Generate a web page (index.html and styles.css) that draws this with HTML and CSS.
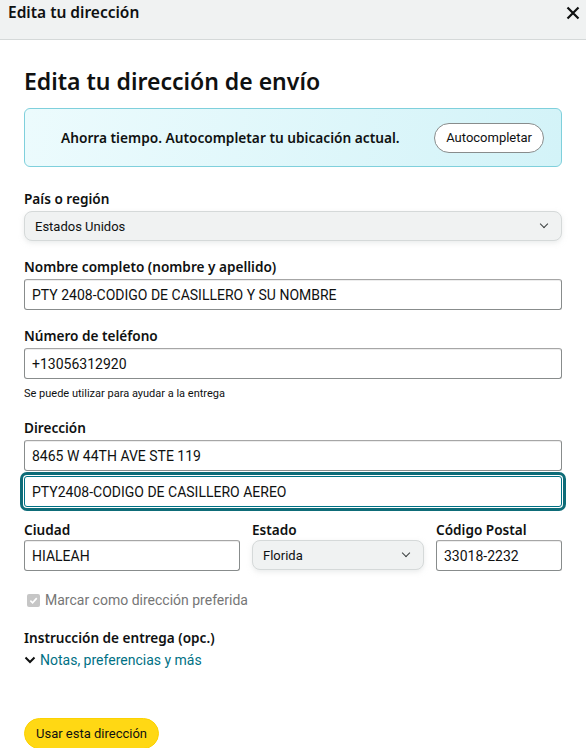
FILE: index.html
```html
<!DOCTYPE html>
<html lang="es">

<head>
    <meta charset="UTF-8">
    <meta name="viewport" content="width=device-width, initial-scale=1.0">
    <title>Edita tu dirección</title>
    <link rel="stylesheet" href="styles.css">
</head>

<body>
    <header class="modal-head">
        <span class="modal-title">Edita tu dirección</span>
        <button class="modal-close" aria-label="Cerrar">
            <svg width="14" height="14" viewBox="0 0 14 14">
                <path d="M1.5 1.5 L12.5 12.5 M12.5 1.5 L1.5 12.5" stroke="#0f1111" stroke-width="2.2" fill="none"/>
            </svg>
        </button>
    </header>

    <main class="modal-body">
        <h1>Edita tu dirección de envío</h1>

        <div class="autofill">
            <span class="autofill-text">Ahorra tiempo. Autocompletar tu ubicación actual.</span>
            <button class="btn-outline">Autocompletar</button>
        </div>

        <div class="field">
            <label for="country">País o región</label>
            <div class="select-wrap">
                <select id="country" class="select">
                    <option>Estados Unidos</option>
                </select>
            </div>
        </div>

        <div class="field">
            <label for="fullname">Nombre completo (nombre y apellido)</label>
            <input id="fullname" class="input" type="text" value="PTY 2408-CODIGO DE CASILLERO Y SU NOMBRE">
        </div>

        <div class="field">
            <label for="phone">Número de teléfono</label>
            <input id="phone" class="input" type="text" value="+13056312920">
            <p class="hint">Se puede utilizar para ayudar a la entrega</p>
        </div>

        <div class="field field-address">
            <label for="line1">Dirección</label>
            <input id="line1" class="input" type="text" value="8465 W 44TH AVE STE 119">
            <input id="line2" class="input input-focus" type="text" value="PTY2408-CODIGO DE CASILLERO AEREO">
        </div>

        <div class="field-row">
            <div>
                <label for="city">Ciudad</label>
                <input id="city" class="input" type="text" value="HIALEAH">
            </div>
            <div>
                <label for="state">Estado</label>
                <div class="select-wrap">
                    <select id="state" class="select">
                        <option>Florida</option>
                    </select>
                </div>
            </div>
            <div>
                <label for="zip">Código Postal</label>
                <input id="zip" class="input" type="text" value="33018-2232">
            </div>
        </div>

        <label class="check">
            <span class="check-box">
                <svg width="9" height="9" viewBox="0 0 10 10">
                    <path d="M1.5 5.2 L4 7.6 L8.6 2.4" stroke="#fff" stroke-width="1.8" fill="none"/>
                </svg>
            </span>
            Marcar como dirección preferida
        </label>

        <div class="instructions">
            <div class="instructions-title">Instrucción de entrega (opc.)</div>
            <a class="expander" href="#">
                <svg width="12" height="8" viewBox="0 0 12 8">
                    <path d="M1.5 1.5 L6 6 L10.5 1.5" stroke="#0f1111" stroke-width="2" fill="none"/>
                </svg>
                Notas, preferencias y más
            </a>
        </div>

        <button class="btn-primary">Usar esta dirección</button>
    </main>
</body>

</html>
```

FILE: styles.css
```css
body {
    margin: 0;
    font-family: Roboto, "Noto Sans", Arial, sans-serif;
    font-size: 13px;
    color: #0f1111;
    background: #ffffff;
    overflow: hidden;
}

.modal-head {
    height: 40px;
    box-sizing: border-box;
    background: #f0f2f2;
    border-bottom: 1px solid #d5d9d9;
    padding: 3px 6px 0 8px;
    display: flex;
    justify-content: space-between;
    align-items: flex-start;
}

.modal-title {
    font-family: "Noto Sans", Roboto, sans-serif;
    font-size: 15.5px;
    font-weight: 600;
    line-height: 18px;
}

.modal-close {
    border: none;
    background: none;
    padding: 3px 0 0;
    cursor: pointer;
}

.modal-body {
    padding: 0 24px;
}

h1 {
    margin: 26px 0 12px;
    font-family: "Noto Sans", Roboto, sans-serif;
    font-size: 23px;
    line-height: 30px;
    font-weight: 600;
}

.autofill {
    display: flex;
    align-items: center;
    justify-content: space-between;
    height: 59px;
    box-sizing: border-box;
    padding: 0 17px 0 36px;
    border: 1px solid #7fd0dc;
    border-radius: 6px;
    background: linear-gradient(100deg, #ecfbfd 0%, #d3f3f8 100%);
    margin-bottom: 23px;
}

.autofill-text {
    font-family: "Noto Sans", Roboto, sans-serif;
    font-size: 13.7px;
    font-weight: 600;
}

.btn-outline {
    height: 30px;
    padding: 0 11px;
    font: inherit;
    color: #0f1111;
    background: #ffffff;
    border: 1px solid #888c8c;
    border-radius: 15px;
}

.field {
    margin-bottom: 17px;
}

label,
.instructions-title {
    display: block;
    font-family: "Noto Sans", Roboto, sans-serif;
    font-size: 13.6px;
    font-weight: 600;
    line-height: 18px;
    margin-bottom: 3px;
}

.input {
    display: block;
    width: 100%;
    height: 31px;
    box-sizing: border-box;
    padding: 0 7px;
    font: inherit;
    font-size: 14px;
    color: #0f1111;
    border: 1px solid #888c8c;
    border-top-color: #a6a6a6;
    border-radius: 3px;
    box-shadow: 0 1px 0 rgba(255, 255, 255, .5), 0 1px 0 rgba(0, 0, 0, .07) inset;
    background: #fff;
}

.input + .input {
    margin-top: 5px;
}

.input-focus {
    border-color: #007185;
    box-shadow: 0 0 0 1px #ffffff, 0 0 0 4px #0e6c78;
}

.select-wrap {
    position: relative;
}

.select-wrap::after {
    content: "";
    position: absolute;
    right: 15px;
    top: 10px;
    width: 5px;
    height: 5px;
    border-right: 1.8px solid #3b3f3f;
    border-bottom: 1.8px solid #3b3f3f;
    transform: rotate(45deg);
    pointer-events: none;
}

.select {
    width: 100%;
    height: 30px;
    box-sizing: border-box;
    padding: 0 10px;
    font: inherit;
    color: #0f1111;
    background: #f0f2f2;
    border: 1px solid #d5d9d9;
    border-radius: 8px;
    box-shadow: 0 2px 5px rgba(213, 217, 217, .5);
    appearance: none;
}

.hint {
    margin: 7px 0 0;
    font-size: 11px;
    line-height: 15px;
    color: #0f1111;
}

.field-address {
    padding-top: 1px;
    margin-bottom: 0;
}

.field-row {
    display: grid;
    grid-template-columns: 216px 172px 1fr;
    column-gap: 12px;
    margin-top: 14px;
    margin-bottom: 20px;
}

.field-row label {
    margin-bottom: 1px;
}

.check {
    display: flex;
    align-items: center;
    gap: 5px;
    font-family: Roboto, sans-serif;
    font-size: 14px;
    font-weight: 400;
    color: #767676;
    margin-left: 3px;
    margin-bottom: 20px;
}

.check-box {
    display: inline-flex;
    align-items: center;
    justify-content: center;
    width: 13px;
    height: 13px;
    border-radius: 2px;
    background: #c6c6c6;
}

.instructions-title {
    margin-bottom: 3px;
}

.expander {
    display: flex;
    align-items: center;
    gap: 4px;
    font-size: 14px;
    line-height: 20px;
    color: #007185;
    text-decoration: none;
}

.btn-primary {
    margin-top: 48px;
    height: 31px;
    padding: 0 11px;
    font: inherit;
    color: #0f1111;
    background: #ffd814;
    border: 1px solid #fcd200;
    border-radius: 16px;
}
```
